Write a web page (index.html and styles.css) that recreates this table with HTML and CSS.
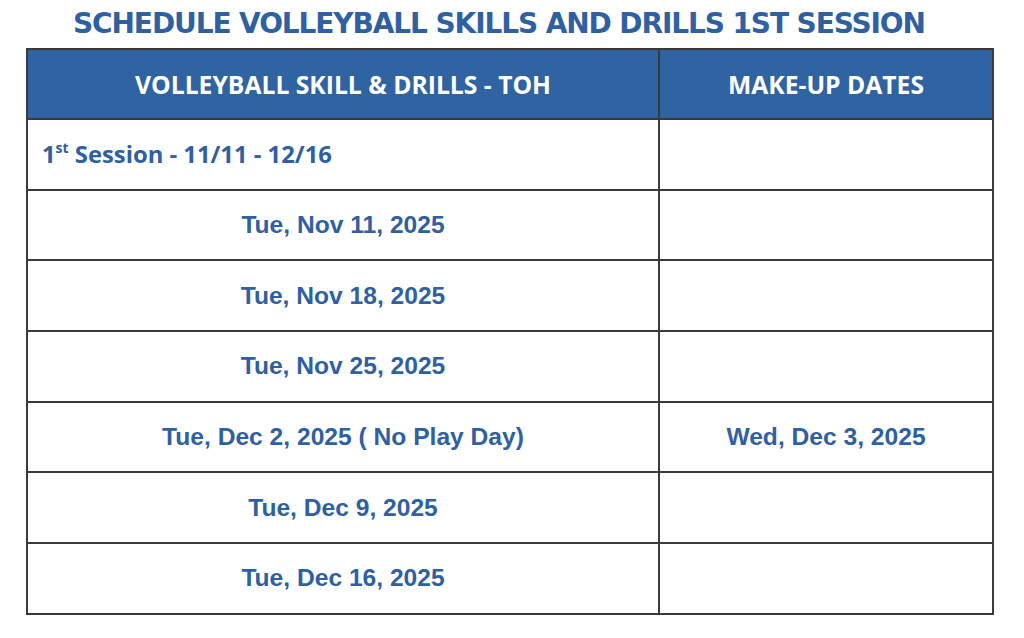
FILE: index.html
```html
<!DOCTYPE html>
<html>
<head>
<meta charset="utf-8">
<link rel="stylesheet" href="styles.css">
</head>
<body>
<div class="page">
  <h1 class="title">SCHEDULE VOLLEYBALL SKILLS AND DRILLS 1ST SESSION</h1>
  <table class="sched">
    <thead>
      <tr><th class="c1">VOLLEYBALL SKILL &amp; DRILLS - TOH</th><th class="c2">MAKE-UP DATES</th></tr>
    </thead>
    <tbody>
      <tr><td class="session">1<sup>st</sup> Session - 11/11 - 12/16</td><td></td></tr>
      <tr><td>Tue, Nov 11, 2025</td><td></td></tr>
      <tr><td>Tue, Nov 18, 2025</td><td></td></tr>
      <tr><td>Tue, Nov 25, 2025</td><td></td></tr>
      <tr><td>Tue, Dec 2, 2025 ( No Play Day)</td><td>Wed, Dec 3, 2025</td></tr>
      <tr><td>Tue, Dec 9, 2025</td><td></td></tr>
      <tr><td>Tue, Dec 16, 2025</td><td></td></tr>
    </tbody>
  </table>
</div>
</body>
</html>
```
FILE: styles.css
```css
html, body { margin: 0; padding: 0; background: #fff; }
.page { width: 1024px; height: 638px; padding-top: 5px; box-sizing: border-box; }
.title {
  margin: 0 0 0 73px;
  width: 848px;
  font-family: "DejaVu Sans", sans-serif;
  font-weight: 700;
  font-size: 28px;
  line-height: 38px;
  color: #2e60a2;
  letter-spacing: -1.1px;
  white-space: nowrap;
}
.sched {
  margin: 5px 0 0 26px;
  width: 968px;
  border-collapse: collapse;
  table-layout: fixed;
}
.sched th, .sched td {
  border: 2px solid #3a3a3a;
  height: 70.7px;
  padding: 0;
  box-sizing: border-box;
}
.sched th {
  background: #2f63a1;
  color: #fff;
  font-family: "Open Sans", sans-serif;
  font-weight: 700;
  font-size: 24.7px;
  height: 70px;
  text-align: center;
}
.sched th.c1 { width: 632px; }
.sched td {
  font-family: "Liberation Sans", Arial, sans-serif;
  font-weight: 700;
  font-size: 24.6px;
  color: #2e60a2;
  text-align: center;
}
.sched td.session {
  text-align: left;
  padding-left: 14px;
  font-family: "Open Sans", sans-serif;
  font-size: 23.8px;
}
.sched td.session sup { font-size: 14px; vertical-align: 10px; line-height: 0; }
```
